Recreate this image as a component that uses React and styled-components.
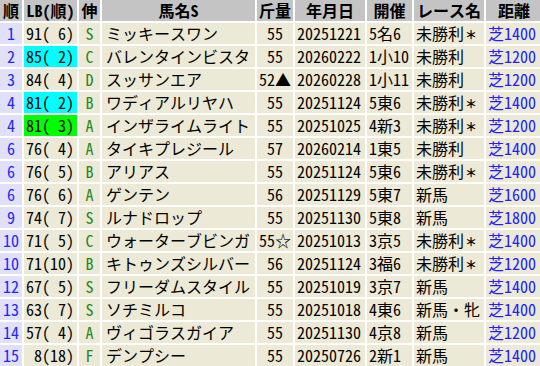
import React from 'react';
import styled, { createGlobalStyle } from 'styled-components';

const rows = [
    ['1', '91', '6', '', 'S', 'ミッキースワン', '55', '20251221', '5名6', '未勝利', true, '芝1400'],
    ['2', '85', '2', 'cyan', 'C', 'バレンタインビスタ', '55', '20260222', '1小10', '未勝利', false, '芝1200'],
    ['3', '84', '4', '', 'D', 'スッサンエア', '52▲', '20260228', '1小11', '未勝利', false, '芝1200'],
    ['4', '81', '2', 'cyan', 'B', 'ワディアルリヤハ', '55', '20251124', '5東6', '未勝利', true, '芝1400'],
    ['4', '81', '3', 'lime', 'A', 'インザライムライト', '55', '20251025', '4新3', '未勝利', true, '芝1200'],
    ['6', '76', '4', '', 'A', 'タイキプレジール', '57', '20260214', '1東5', '未勝利', false, '芝1400'],
    ['6', '76', '5', '', 'B', 'アリアス', '55', '20251124', '5東6', '未勝利', true, '芝1400'],
    ['6', '76', '6', '', 'A', 'ゲンテン', '56', '20251129', '5東7', '新馬', false, '芝1600'],
    ['9', '74', '7', '', 'S', 'ルナドロップ', '55', '20251130', '5東8', '新馬', false, '芝1800'],
    ['10', '71', '5', '', 'C', 'ウォーターブビンガ', '55☆', '20251013', '3京5', '未勝利', true, '芝1400'],
    ['10', '71', '10', '', 'B', 'キトゥンズシルバー', '56', '20251124', '3福6', '未勝利', true, '芝1200'],
    ['12', '67', '5', '', 'S', 'フリーダムスタイル', '55', '20251019', '3京7', '新馬', false, '芝1400'],
    ['13', '63', '7', '', 'S', 'ソチミルコ', '55', '20251018', '4東6', '新馬・牝', false, '芝1400'],
    ['14', '57', '4', '', 'A', 'ヴィゴラスガイア', '55', '20251130', '4京8', '新馬', false, '芝1200'],
    ['15', '8', '18', '', 'F', 'デンプシー', '55', '20250726', '2新1', '新馬', false, '芝1400'],
];

const headers = ['順', 'LB(順)', '伸', '馬名S', '斤量', '年月日', '開催', 'レース名', '距離'];

function App() {
    return (
        <>
            <GlobalStyle />
            <Grid>
                {headers.map((h) => (
                    <Head key={h}>{h}</Head>
                ))}
                {rows.map((r, i) => (
                    <Row key={i}>
                        <Rank>{r[0]}</Rank>
                        <Cell $bg={r[3] || undefined}>
                            <Num>{r[1]}</Num>(<Num>{r[2]}</Num>)
                        </Cell>
                        <Cell $align="center" $color="#1c8a1c">{r[4]}</Cell>
                        <Cell $pad="4px">{r[5]}</Cell>
                        <Cell $align="center">{r[6]}</Cell>
                        <Cell>{r[7]}</Cell>
                        <Cell>{r[8]}</Cell>
                        <Cell>
                            {r[9]}
                            {r[10] && <Star>＊</Star>}
                        </Cell>
                        <Cell $color="#2020ff">{r[11]}</Cell>
                    </Row>
                ))}
            </Grid>
        </>
    )
}

export default App

const GlobalStyle = createGlobalStyle`
    html, body {
        margin: 0;
        padding: 0;
        background: #ffffff;
        overflow: hidden;
    }
    body {
        font-family: "Noto Sans Mono CJK JP", "Noto Sans CJK JP", sans-serif;
        font-size: 16px;
    }
`

const Grid = styled.div`
    display: grid;
    grid-template-columns: 22px 53px 21px 153px 36px 70px 45px 70px 56px;
    grid-auto-rows: 21px;
    gap: 2px;
    width: 542px;
`

const Row = styled.div`
    display: contents;
`

const Head = styled.div`
    background: #c4c4c4;
    color: #000000;
    font-weight: bold;
    text-align: center;
    line-height: 21px;
    white-space: nowrap;
`

const Cell = styled.div`
    background: ${(p) => p.$bg || '#ece9d6'};
    color: ${(p) => p.$color || '#000000'};
    text-align: ${(p) => p.$align || 'left'};
    padding: 0 ${(p) => p.$pad || '2px'};
    line-height: 21px;
    white-space: nowrap;
`

const Rank = styled(Cell)`
    background: #e0e0f8;
    color: #2424ff;
    text-align: center;
    padding: 0;
`

const Num = styled.span`
    display: inline-block;
    width: 2ch;
    text-align: right;
`

const Star = styled.span`
    font-size: 12px;
    font-weight: bold;
    margin-left: 1px;
`
